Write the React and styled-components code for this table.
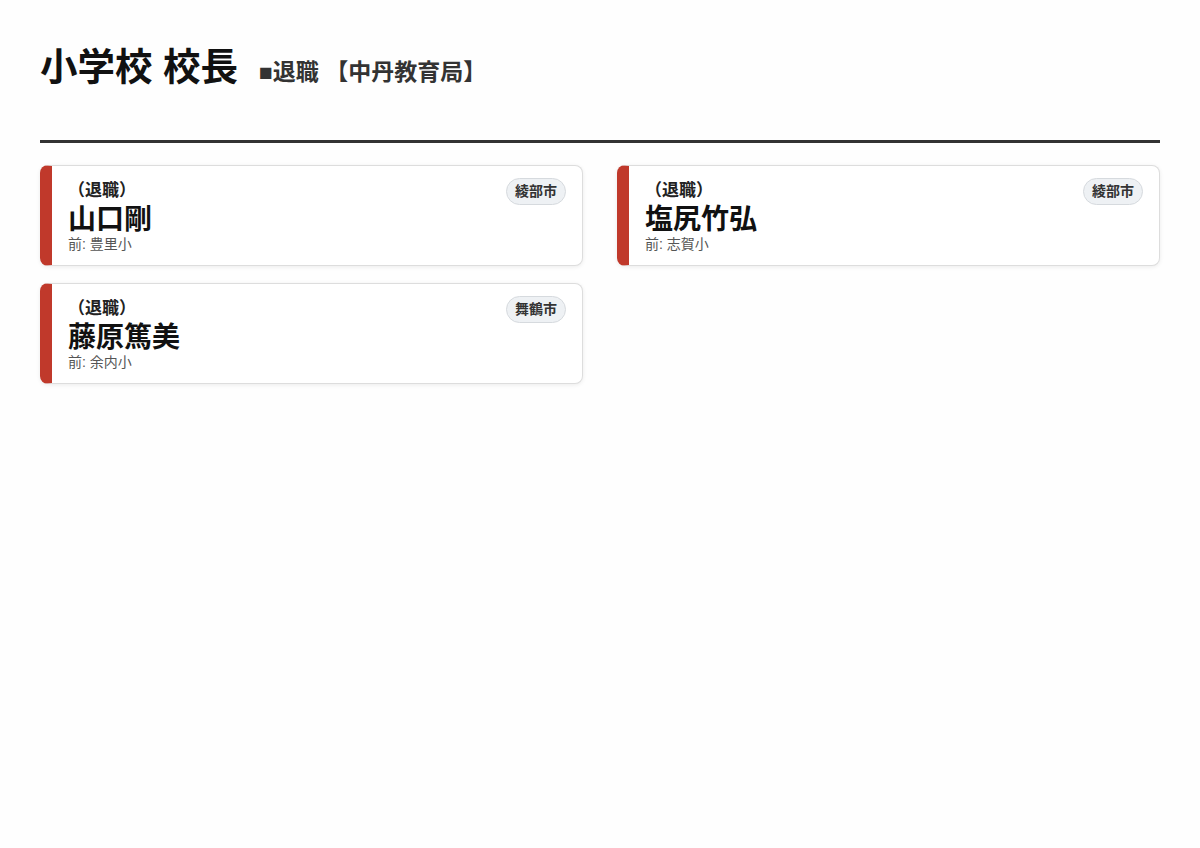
import React from 'react';
import styled, { createGlobalStyle } from 'styled-components';

const GlobalStyle = createGlobalStyle`
  html, body {
    margin: 0;
    padding: 0;
    background: #fefefe;
  }
  body {
    font-family: "Liberation Sans", "Noto Sans CJK JP", sans-serif;
    color: #111;
  }
`;

const Page = styled.main`
  padding: 40px 40px;
`;

const Header = styled.header`
  display: flex;
  align-items: baseline;
  gap: 21px;
  padding-bottom: 46px;
  border-bottom: 3px solid #333;
  margin-bottom: 22px;
`;

const Title = styled.h1`
  margin: 0;
  font-size: 37.5px;
  line-height: 54px;
  font-weight: 700;
  color: #111;
`;

const SubTitle = styled.span`
  font-size: 23px;
  font-weight: 700;
  color: #333;
`;

const Grid = styled.div`
  display: grid;
  grid-template-columns: 1fr 1fr;
  column-gap: 34px;
  row-gap: 17px;
`;

const Card = styled.div`
  display: flex;
  justify-content: space-between;
  align-items: flex-start;
  background: #fff;
  border: 1px solid #ddd;
  border-left: 12px solid ${p => p.accent};
  border-radius: 8px;
  box-shadow: 0 1px 4px rgba(0, 0, 0, 0.08);
  padding: 12px 16px 13px 16px;
`;

const Info = styled.div`
  display: flex;
  flex-direction: column;
`;

const Status = styled.div`
  font-size: 17px;
  font-weight: 700;
  line-height: 25px;
  color: #222;
`;

const Name = styled.div`
  font-size: 28px;
  font-weight: 700;
  line-height: 33px;
  color: #111;
`;

const Prev = styled.div`
  font-size: 14px;
  line-height: 16px;
  color: #555;
`;

const Badge = styled.span`
  display: inline-block;
  padding: 4px 8px;
  font-size: 14px;
  font-weight: 700;
  line-height: 17px;
  color: #333;
  background: #eef1f4;
  border: 1px solid #d6dade;
  border-radius: 14px;
`;

const people = [
  { name: '山口剛', prev: '豊里小', city: '綾部市' },
  { name: '塩尻竹弘', prev: '志賀小', city: '綾部市' },
  { name: '藤原篤美', prev: '余内小', city: '舞鶴市' },
];

const App = () => {
  return (
    <Page>
      <GlobalStyle />
      <Header>
        <Title>小学校 校長</Title>
        <SubTitle>■退職 【中丹教育局】</SubTitle>
      </Header>
      <Grid>
        {people.map(p => (
          <Card key={p.name} accent="#c0392b">
            <Info>
              <Status>（退職）</Status>
              <Name>{p.name}</Name>
              <Prev>前: {p.prev}</Prev>
            </Info>
            <Badge>{p.city}</Badge>
          </Card>
        ))}
      </Grid>
    </Page>
  );
};

export default App;
